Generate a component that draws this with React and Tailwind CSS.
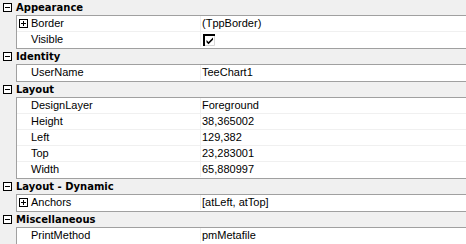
import React from 'react';

const sections = [
  {
    title: 'Appearance',
    rows: [
      { name: 'Border', value: '(TppBorder)', expand: true },
      { name: 'Visible', check: true },
    ],
  },
  { title: 'Identity', rows: [{ name: 'UserName', value: 'TeeChart1' }] },
  {
    title: 'Layout',
    rows: [
      { name: 'DesignLayer', value: 'Foreground' },
      { name: 'Height', value: '38,365002' },
      { name: 'Left', value: '129,382' },
      { name: 'Top', value: '23,283001' },
      { name: 'Width', value: '65,880997' },
    ],
  },
  { title: 'Layout - Dynamic', rows: [{ name: 'Anchors', value: '[atLeft, atTop]', expand: true }] },
  { title: 'Miscellaneous', rows: [{ name: 'PrintMethod', value: 'pmMetafile' }] },
];

const BoxIcon = ({ plus }) => (
  <svg width="9" height="9" viewBox="0 0 9 9" className="block">
    <rect x="0.5" y="0.5" width="8" height="8" fill="#fff" stroke="#000" />
    <path d="M2 4.5h5" stroke="#000" />
    {plus && <path d="M4.5 2v5" stroke="#000" />}
  </svg>
);

const CheckBox = () => (
  <svg width="12" height="12" viewBox="0 0 12 12" className="block">
    <rect x="0" y="0" width="12" height="12" fill="#fff" />
    <path d="M0 0h12v2H2v10H0z" fill="#000" />
    <path d="M11.5 2v9.5H2" stroke="#d8d8d8" fill="none" />
    <path d="M3.5 6l2 2 4.5-4.5v2.2L5.5 10.2l-2-2z" fill="#000" />
  </svg>
);

export default function App() {
  return (
    <div
      className="w-[466px] h-[244px] bg-[#f0f0f0] overflow-hidden text-[11px] text-black"
      style={{ fontFamily: '"Liberation Sans", Arial, sans-serif' }}
    >
      {sections.map((s) => (
        <div key={s.title}>
          <div className="h-[15px] flex items-center">
            <div className="w-[16px] pl-[3px]">
              <BoxIcon />
            </div>
            <span
              className="font-bold text-[10px] leading-[15px]"
              style={{ fontFamily: '"DejaVu Sans", sans-serif' }}
            >
              {s.title}
            </span>
          </div>
          <div className="ml-[16px] bg-white border-l border-t border-b border-[#a0a0a0]">
            {s.rows.map((r, i) => (
              <div
                key={r.name}
                className={`flex h-[16px] ${i < s.rows.length - 1 ? 'border-b border-[#f0f0f0]' : 'h-[15px]'}`}
              >
                <div className="w-[184px] flex items-center border-r border-[#f0f0f0] h-[15px]">
                  <div className="w-[14px] pl-[2px]">{r.expand && <BoxIcon plus />}</div>
                  <span className="leading-[15px]">{r.name}</span>
                </div>
                <div className="flex-1 flex items-center pl-[1px] h-[15px]">
                  {r.check ? (
                    <div className="ml-[1px]">
                      <CheckBox />
                    </div>
                  ) : (
                    <span className="leading-[15px]">{r.value}</span>
                  )}
                </div>
              </div>
            ))}
          </div>
        </div>
      ))}
    </div>
  );
}
